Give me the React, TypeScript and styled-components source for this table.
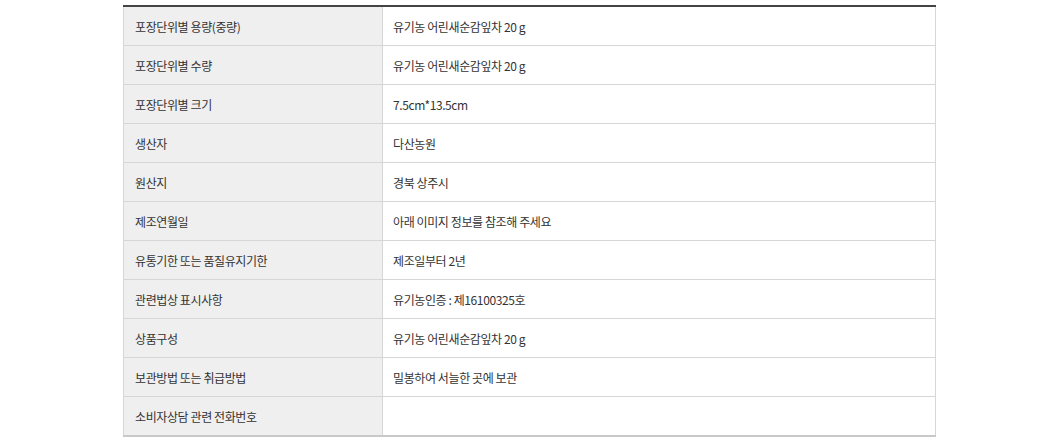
import styled, { createGlobalStyle } from 'styled-components'

const GlobalStyle = createGlobalStyle`
  html, body {
    margin: 0;
    padding: 0;
    background: #ffffff;
  }
`

const rows: [string, string][] = [
  ['포장단위별 용량(중량)', '유기농 어린새순감잎차 20 g'],
  ['포장단위별 수량', '유기농 어린새순감잎차 20 g'],
  ['포장단위별 크기', '7.5cm*13.5cm'],
  ['생산자', '다산농원'],
  ['원산지', '경북 상주시'],
  ['제조연월일', '아래 이미지 정보를 참조해 주세요'],
  ['유통기한 또는 품질유지기한', '제조일부터 2년'],
  ['관련법상 표시사항', '유기농인증 : 제16100325호'],
  ['상품구성', '유기농 어린새순감잎차 20 g'],
  ['보관방법 또는 취급방법', '밀봉하여 서늘한 곳에 보관'],
  ['소비자상담 관련 전화번호', ''],
]

export default function App() {
  return (
    <Page>
      <GlobalStyle />
      <InfoTable>
        <colgroup>
          <LabelCol />
          <col />
        </colgroup>
        <tbody>
          {rows.map(([label, value]) => (
            <tr key={label}>
              <Th>{label}</Th>
              <Td>{value}</Td>
            </tr>
          ))}
        </tbody>
      </InfoTable>
    </Page>
  )
}

const Page = styled.div`
  padding: 5px 0 0 123px;
  font-family: 'Noto Sans CJK KR', 'Noto Sans', sans-serif;
`

const InfoTable = styled.table`
  width: 813px;
  border-collapse: collapse;
  table-layout: fixed;
  border-top: 2px solid #444444;
  border-bottom: 2px solid #c8c8c8;
`

const LabelCol = styled.col`
  width: 259px;
`

const Th = styled.th`
  height: 38px;
  padding: 0 11px;
  background: #efefef;
  border: 1px solid #d6d6d6;
  border-top: none;
  color: #333333;
  font-size: 12px;
  font-weight: 400;
  text-align: left;
  letter-spacing: -0.4px;
`

const Td = styled.td`
  height: 38px;
  padding: 0 10px;
  background: #ffffff;
  border: 1px solid #d6d6d6;
  border-top: none;
  color: #333333;
  font-size: 12px;
  letter-spacing: -0.4px;
`
